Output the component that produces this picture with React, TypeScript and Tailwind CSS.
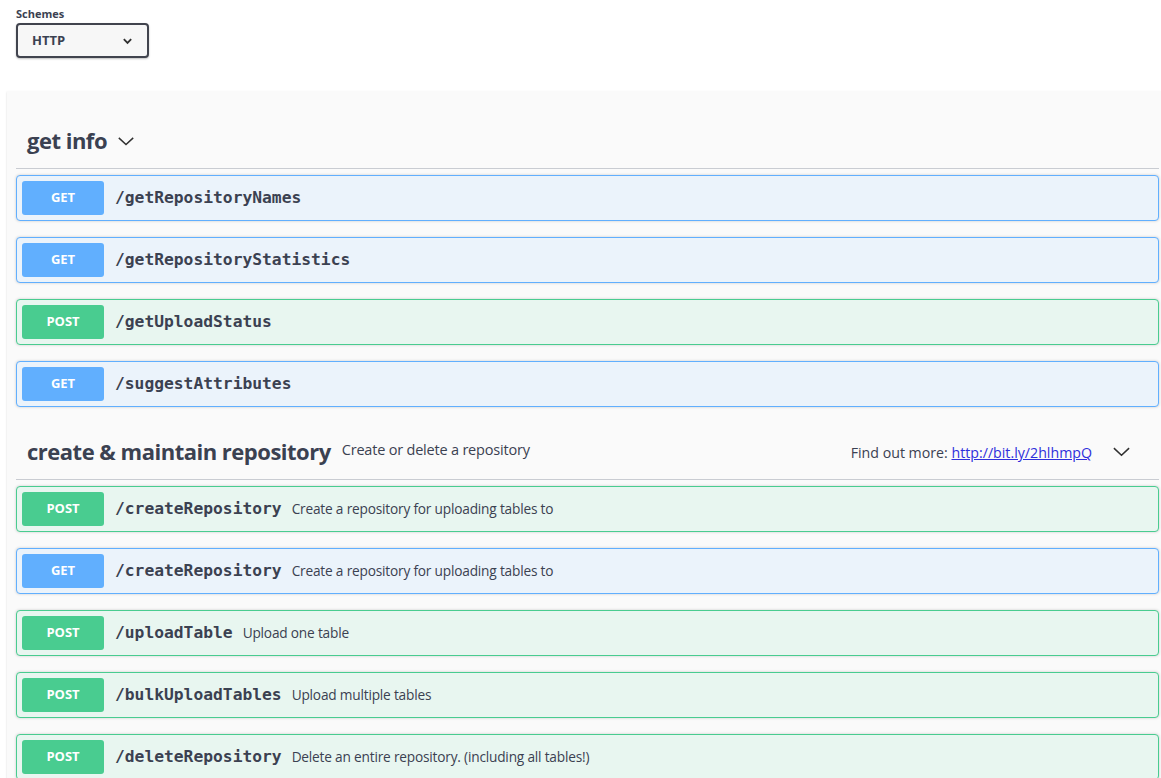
import React from "react";

type Method = "GET" | "POST";

interface Operation {
  method: Method;
  path: string;
  summary?: string;
}

interface Tag {
  name: string;
  description?: string;
  docsUrl?: string;
  operations: Operation[];
}

const tags: Tag[] = [
  {
    name: "get info",
    operations: [
      { method: "GET", path: "/getRepositoryNames" },
      { method: "GET", path: "/getRepositoryStatistics" },
      { method: "POST", path: "/getUploadStatus" },
      { method: "GET", path: "/suggestAttributes" },
    ],
  },
  {
    name: "create & maintain repository",
    description: "Create or delete a repository",
    docsUrl: "http://bit.ly/2hlhmpQ",
    operations: [
      { method: "POST", path: "/createRepository", summary: "Create a repository for uploading tables to" },
      { method: "GET", path: "/createRepository", summary: "Create a repository for uploading tables to" },
      { method: "POST", path: "/uploadTable", summary: "Upload one table" },
      { method: "POST", path: "/bulkUploadTables", summary: "Upload multiple tables" },
      { method: "POST", path: "/deleteRepository", summary: "Delete an entire repository. (including all tables!)" },
    ],
  },
];

const heading = { fontFamily: '"Open Sans", "Noto Sans", sans-serif' };
const mono = { fontFamily: '"DejaVu Sans Mono", "Liberation Mono", monospace' };

function Chevron({ className }: { className?: string }) {
  return (
    <svg viewBox="0 0 20 20" className={className} fill="none" stroke="currentColor" strokeWidth="1.6">
      <path d="M2 6.5 L10 14 L18 6.5" />
    </svg>
  );
}

function OperationRow({ op }: { op: Operation }) {
  const isGet = op.method === "GET";
  return (
    <div
      className={
        "mb-4 flex h-[46px] items-center rounded-[4px] border p-[5px] shadow-[0_0_3px_rgba(0,0,0,0.19)] " +
        (isGet ? "border-[#61affe] bg-[#ebf3fb]" : "border-[#49cc90] bg-[#e8f6f0]")
      }
    >
      <span
        className={
          "flex h-[34px] w-[82px] shrink-0 items-center justify-center rounded-[3px] text-[13px] font-bold text-white " +
          (isGet ? "bg-[#61affe]" : "bg-[#49cc90]")
        }
        style={heading}
      >
        {op.method}
      </span>
      <span className="pl-[11px] text-[16.3px] font-semibold text-[#3b4151]" style={mono}>
        {op.path}
      </span>
      {op.summary && (
        <span className="pl-[10px] text-[13.7px] tracking-[-0.2px] text-[#3b4151]" style={heading}>
          {op.summary}
        </span>
      )}
    </div>
  );
}

function TagSection({ tag }: { tag: Tag }) {
  return (
    <section>
      <div className="flex h-[57px] items-center border-b border-[#c9ccd2] pl-[11px] pr-[28px] text-[#3b4151]">
        <h3 className="text-[22px] font-bold tracking-[-0.5px]" style={heading}>
          {tag.name}
        </h3>
        {tag.description && (
          <span className="pl-[11px] pb-[3px] text-[14.5px] tracking-[-0.2px]" style={heading}>
            {tag.description}
          </span>
        )}
        {tag.docsUrl ? (
          <>
            <span className="ml-auto pt-[4px] text-[14.2px]" style={heading}>
              Find out more:{" "}
              <a href={tag.docsUrl} className="text-[#2f2fdc] underline">
                {tag.docsUrl}
              </a>
            </span>
            <Chevron className="ml-[20px] h-[19px] w-[19px] text-[#303030]" />
          </>
        ) : (
          <Chevron className="ml-[10px] mt-[1px] h-[18px] w-[18px] text-[#303030]" />
        )}
      </div>
      <div className="pt-[6px]">
        {tag.operations.map((op, i) => (
          <OperationRow key={i} op={op} />
        ))}
      </div>
    </section>
  );
}

export default function App() {
  return (
    <div className="min-h-screen bg-white text-[#3b4151]">
      {/* schemes picker */}
      <div className="px-4 pt-[7px]" style={heading}>
        <label className="block text-[11px] font-bold leading-[14px]">Schemes</label>
        <div className="mt-[2px] flex h-[35px] w-[133px] items-center justify-between rounded-[4px] border-2 border-[#41444e] bg-[#f7f7f7] pl-[14px] pr-[14px] shadow-[0_1px_2px_rgba(0,0,0,0.25)]">
          <span className="text-[13px] font-bold">HTTP</span>
          <svg viewBox="0 0 12 8" className="h-[8px] w-[11px]" fill="none" stroke="#303030" strokeWidth="2">
            <path d="M2 2 L6 6 L10 2" />
          </svg>
        </div>
      </div>

      {/* operations */}
      <div className="ml-[7px] mt-[33px] bg-[#fafafa] pl-[9px] pr-[2px] pt-[21px] shadow-[0_1px_2px_rgba(0,0,0,0.15)]">
        {tags.map((tag) => (
          <TagSection key={tag.name} tag={tag} />
        ))}
      </div>
    </div>
  );
}
